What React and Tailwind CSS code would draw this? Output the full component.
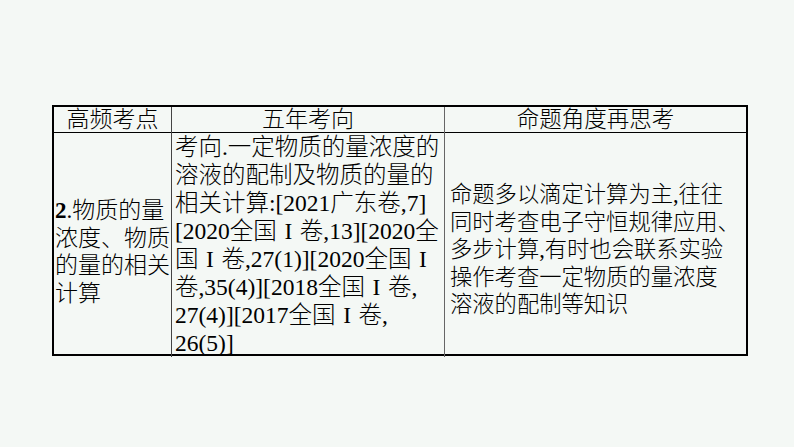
import React from "react";

const font = { fontFamily: '"Liberation Serif", "Noto Sans CJK SC", serif' };

function I() {
  return <span className="inline-block w-[23px] text-center">I</span>;
}

export default function App() {
  return (
    <div className="w-[794px] h-[447px] bg-[#f4f8f5] pt-[105px] pl-[52px] text-black font-light" style={font}>
      <div className="w-[696px] h-[251px] border-2 border-black flex flex-col">
        <div className="h-[26px] border-b border-black grid grid-cols-[118px_273px_1fr] text-[23px] leading-[26px]">
          <div className="text-center border-r border-[#444]">高频考点</div>
          <div className="text-center border-r border-[#666]">五年考向</div>
          <div className="text-center text-[22.5px]">命题角度再思考</div>
        </div>
        <div className="flex-1 grid grid-cols-[118px_273px_1fr]">
          <div className="border-r border-[#444] flex flex-col justify-center pl-[1px] pt-[14px] text-[23px] leading-[27.5px]">
            <div><b className="font-bold">2</b>.物质的量</div>
            <div>浓度、物质</div>
            <div>的量的相关</div>
            <div>计算</div>
          </div>
          <div className="border-r border-[#666] pl-[3px] text-[23.5px] leading-[28px] whitespace-nowrap">
            <div>考向.一定物质的量浓度的</div>
            <div>溶液的配制及物质的量的</div>
            <div>相关计算:[2021广东卷,7]</div>
            <div>[2020全国<I />卷,13][2020全</div>
            <div>国<I />卷,27(1)][2020全国<I /></div>
            <div>卷,35(4)][2018全国<I />卷,</div>
            <div>27(4)][2017全国<I />卷,</div>
            <div>26(5)]</div>
          </div>
          <div className="flex flex-col justify-center pl-[5px] pt-[10px] text-[22.3px] leading-[27.5px] whitespace-nowrap">
            <div>命题多以滴定计算为主,往往</div>
            <div>同时考查电子守恒规律应用、</div>
            <div>多步计算,有时也会联系实验</div>
            <div>操作考查一定物质的量浓度</div>
            <div>溶液的配制等知识</div>
          </div>
        </div>
      </div>
    </div>
  );
}
